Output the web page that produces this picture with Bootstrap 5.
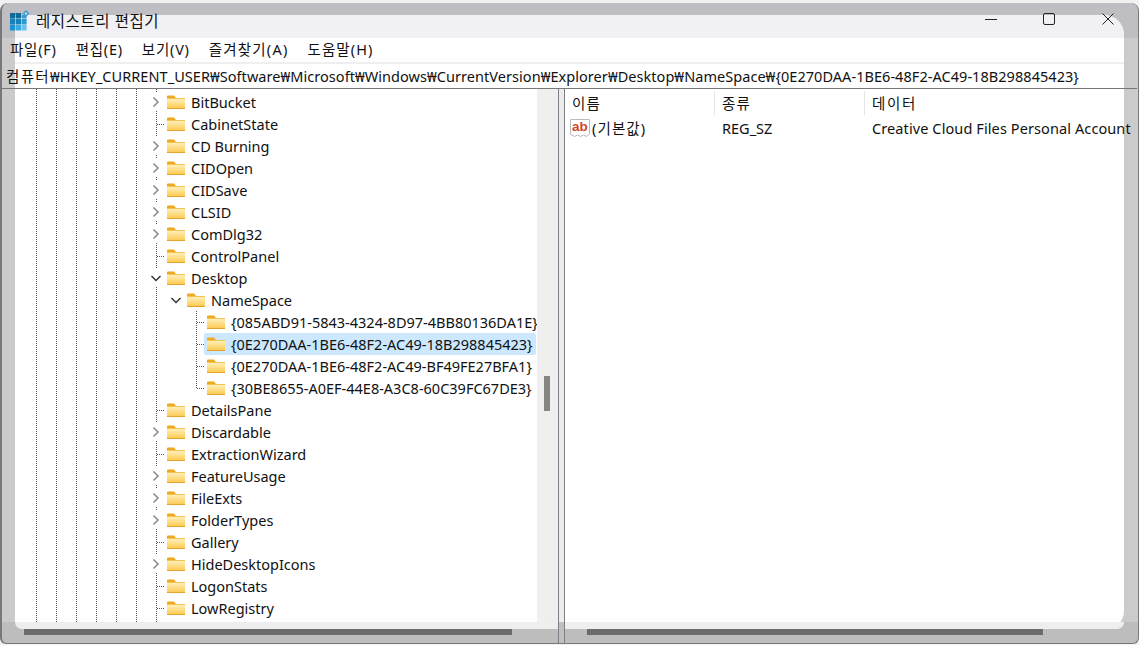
<!DOCTYPE html>
<html lang="ko"><head><meta charset="utf-8"><title>레지스트리 편집기</title>
<link href="https://cdn.jsdelivr.net/npm/bootstrap@5.3.0/dist/css/bootstrap.min.css" rel="stylesheet">
<style>
html,body{height:645px;overflow:hidden;margin:0}
body{background:#f1f1f1;font-family:"Noto Sans","Noto Sans CJK KR",sans-serif;font-size:14.5px;color:#111;line-height:22px}
.frame{margin-top:3px;height:641px;padding:12px 14px 0 13px;border:solid #77777c;border-width:0 1px 1px 2px;border-radius:8px 8px 6px 6px;background:linear-gradient(#bfbec3 0 35px,#cbcbcb 35px 619px,#bdbdbd 619px)}
.panel{height:614px;background:#fff;border-radius:0 20px 18px 16px}
.panel>*{flex:none}
.titlebar{height:23px;background:#f0f0f5;border-top-right-radius:20px;display:flow-root}
.title-in{margin:-6px 0 0 -5px;height:24px}
.title-tx{font-size:15.5px;margin-left:5px;letter-spacing:.55px}
.menubar{height:24px;margin-left:-5px;gap:19px;letter-spacing:.75px;padding-bottom:2px}
.mwide{letter-spacing:1.2px}
.mlast{letter-spacing:1.1px}
.sep{height:2px;background:#efefef}
.addr{height:24px;margin-left:-9px;white-space:nowrap;letter-spacing:.05px}
.addr b{font-weight:400;letter-spacing:1.3px}
.dline{height:1px;background:#77777a;margin:0 -13px 0 -13px}
.panes{height:554px}
.lcol{width:544px;border-right:1px solid #7d8088}
.tv{height:533px}
.tree{width:522px;padding-top:2px;overflow:hidden;background-color:#fff}
.vs{width:21px;background:#efefef;padding:287px 0 0 7px}
.vthumb{width:6px;height:35px;background:#858585}
.hs{height:7px;background:#eee}
.hs-l{border-bottom-left-radius:16px}
.hs-r{border-bottom-right-radius:18px}
.hb{height:14px;padding-left:9px}
.hb-r{padding-left:22px}
.hthumb{height:6px;background:#6b6b6b}
.split{width:5px;background:linear-gradient(#ececec 0 533px,#c0c0c0 533px)}
.rcol{width:560px;border-left:1px solid #7d8088}
.rtop{height:533px}
.rhead{height:26px;padding-top:3px;letter-spacing:1.2px}
.hc{height:24px;padding-left:7px;border-right:1px solid #e6e6e6;margin-top:-1px;line-height:24px}
.c1{width:150px}.c2{width:150px}
.hlast{padding-left:7px;letter-spacing:1.6px}
.rrow{height:22px;white-space:nowrap;margin-top:2px}
.ab{margin:0 2px 0 5px;flex:none}
.cname{width:130px;flex:none;letter-spacing:1.1px}.ctype{width:150px;flex:none}.cdata{flex:none;letter-spacing:.1px}
.trow{height:22px;white-space:nowrap}
.exp{width:18px;height:18px;background:#fff;margin-top:2px;flex:none}
.stub{width:18px;height:22px;flex:none;background:repeating-linear-gradient(90deg,#555 0 1px,transparent 1px 2px) 10px 11px/8px 1px no-repeat}
.stub-v{background:repeating-linear-gradient(90deg,#555 0 1px,transparent 1px 2px) 10px 11px/8px 1px no-repeat,repeating-linear-gradient(#555 0 1px,transparent 1px 2px) 9px 0/1px 22px no-repeat}
.stub-e{background:repeating-linear-gradient(90deg,#555 0 1px,transparent 1px 2px) 10px 11px/8px 1px no-repeat,repeating-linear-gradient(#555 0 1px,transparent 1px 2px) 9px 0/1px 12px no-repeat}
.l0{padding-left:132px}.l1{padding-left:152px}.l2{padding-left:172px}
.fold{margin:0 6px 0 2px;flex:none}
.item{padding-left:3px;margin-left:-1px;flex:1;min-width:0}
.item .fold{margin-left:0}
.sel{background:#cce8ff;border-radius:2px;margin-right:1px}
</style></head><body>
<div class="frame">
<div class="panel d-flex flex-column">
 <div class="titlebar">
  <div class="title-in d-flex align-items-center">
   <svg width="21" height="22" viewBox="0 0 21 22"><g fill="#0e6c9c"><rect x="0" y="3" width="5.300" height="5.500"/><rect x="5.800" y="3" width="5.300" height="5.500"/></g><rect x="11.600" y="5" width="5" height="3.500" fill="#3a9ac9"/><g fill="#1583b8"><rect x="0" y="9" width="5.300" height="5.500"/><rect x="5.800" y="9" width="5.300" height="5.500"/></g><rect x="11.600" y="9" width="5" height="5.500" fill="#2a9ad2"/><rect x="0" y="15" width="5.300" height="5.500" fill="#1c93cf"/><rect x="5.800" y="15" width="5.300" height="5.500" fill="#3aa9e0"/><rect x="11.600" y="15" width="5" height="5.500" fill="#63c2ee"/><path d="M16 0l3.500 3.500-3.500 3.500-3.500-3.500z" fill="#3f9fd0"/><circle cx="16" cy="3.500" r="1.200" fill="#a8dcf5"/></svg>
   <span class="title-tx">레지스트리 편집기</span>
   <svg class="ms-auto" width="139" height="16" viewBox="0 0 139 16"><path d="M0 6.500h12" stroke="#222" fill="none"/><rect x="58.500" y=".5" width="11" height="11" rx="1.500" stroke="#222" fill="none"/><path d="M117.500 .5l11 11M128.500 .5l-11 11" stroke="#222" fill="none"/></svg>
  </div>
 </div>
 <div class="menubar d-flex align-items-center"><span>파일(F)</span><span>편집(E)</span><span>보기(V)</span><span class="mwide">즐겨찾기(A)</span><span class="mlast">도움말(H)</span></div>
 <div class="sep"></div>
 <div class="addr d-flex align-items-center"><span><b>컴퓨터</b>₩HKEY_CURRENT_USER₩Software₩Microsoft₩Windows₩CurrentVersion₩Explorer₩Desktop₩NameSpace₩{0E270DAA-1BE6-48F2-AC49-18B298845423}</span></div>
 <div class="dline"></div>
 <div class="panes d-flex">
  <div class="lcol d-flex flex-column">
   <div class="tv d-flex">
    <div class="tree" id="tree"></div>
    <div class="vs"><div class="vthumb"></div></div>
   </div>
   <div class="hs hs-l"></div>
   <div class="hb"><div class="hthumb" style="width:488px"></div></div>
  </div>
  <div class="split"></div>
  <div class="rcol d-flex flex-column">
   <div class="rtop">
    <div class="rhead d-flex">
     <div class="hc c1">이름</div><div class="hc c2">종류</div><div class="hlast">데이터</div>
    </div>
    <div class="rrow d-flex align-items-center">
     <svg class="ab" width="20" height="20" viewBox="0 0 20 20"><path d="M.5 1.500h19v14.500l-3 2.500-3-1.500-3 1.500-3-1.500-3 1.500-4-2z" fill="#fff" stroke="#bbb"/><text x="10" y="12.500" text-anchor="middle" font-family="Liberation Sans" font-weight="700" font-size="13.500" fill="#d2462b">ab</text></svg>
     <span class="cname">(기본값)</span><span class="ctype">REG_SZ</span><span class="cdata">Creative Cloud Files Personal Account</span>
    </div>
   </div>
   <div class="hs hs-r"></div>
   <div class="hb hb-r"><div class="hthumb" style="width:456px"></div></div>
  </div>
 </div>
</div>
</div>
<script>
const F='<svg class="fold" width="18" height="15" viewBox="0 0 18 15"><defs><linearGradient id="g" x1="0" y1="0" x2="0" y2="1"><stop offset="0" stop-color="#fff3c4"/><stop offset="1" stop-color="#fcc84a"/></linearGradient></defs><path d="M0 1.500a1 1 0 0 1 1-1h6l2 2.500H0z" fill="#efa91f"/><rect x="0" y="3" width="18" height="11" fill="url(#g)"/><rect x="0" y="13" width="18" height="1" fill="#e3a32c"/><rect x="0" y="3" width="18" height="1" fill="#f3c24f"/></svg>';
const R='<svg class="exp" viewBox="0 0 18 18"><path d="M6.500 4.500l4.500 4.500-4.500 4.500" fill="none" stroke="#8a8a8a" stroke-width="1.500"/></svg>';
const D='<svg class="exp" viewBox="0 0 18 18"><path d="M4.500 7l4.500 4.500 4.500-4.500" fill="none" stroke="#333" stroke-width="1.500"/></svg>';
const rows=[['BitBucket',0,R],['CabinetState',0,''],['CD Burning',0,R],['CIDOpen',0,R],['CIDSave',0,R],['CLSID',0,R],['ComDlg32',0,R],['ControlPanel',0,''],['Desktop',0,D],['NameSpace',1,D],
['{085ABD91-5843-4324-8D97-4BB80136DA1E}',2,'v'],['{0E270DAA-1BE6-48F2-AC49-18B298845423}',2,'s'],['{0E270DAA-1BE6-48F2-AC49-BF49FE27BFA1}',2,'v'],['{30BE8655-A0EF-44E8-A3C8-60C39FC67DE3}',2,'e'],
['DetailsPane',0,''],['Discardable',0,R],['ExtractionWizard',0,''],['FeatureUsage',0,R],['FileExts',0,R],['FolderTypes',0,R],['Gallery',0,''],['HideDesktopIcons',0,R],['LogonStats',0,''],['LowRegistry',0,'']];
document.getElementById('tree').innerHTML=rows.map(r=>{
 if(r[1]==2){const c=r[2]=='e'?'stub stub-e':'stub stub-v';return `<div class="trow d-flex l2"><div class="${c}"></div><div class="item d-flex align-items-center ${r[2]=='s'?'sel':''}">${F}<span>${r[0]}</span></div></div>`}
 return `<div class="trow d-flex l${r[1]}">${r[2]||'<div class="stub"></div>'}<div class="d-flex align-items-center">${F}<span>${r[0]}</span></div></div>`
}).join('');
const t=document.getElementById('tree'),xs=[21,41,61,81,101,121,141];
t.style.backgroundImage=xs.map(()=> 'linear-gradient(#555 50%,transparent 50%)').join(',');
t.style.backgroundPosition=xs.map(x=>x+'px 0').join(',');
t.style.backgroundSize='1px 2px';
t.style.backgroundRepeat='repeat-y';
</script>
<script src="https://cdn.jsdelivr.net/npm/bootstrap@5.3.0/dist/js/bootstrap.bundle.min.js"></script>
</body></html>
